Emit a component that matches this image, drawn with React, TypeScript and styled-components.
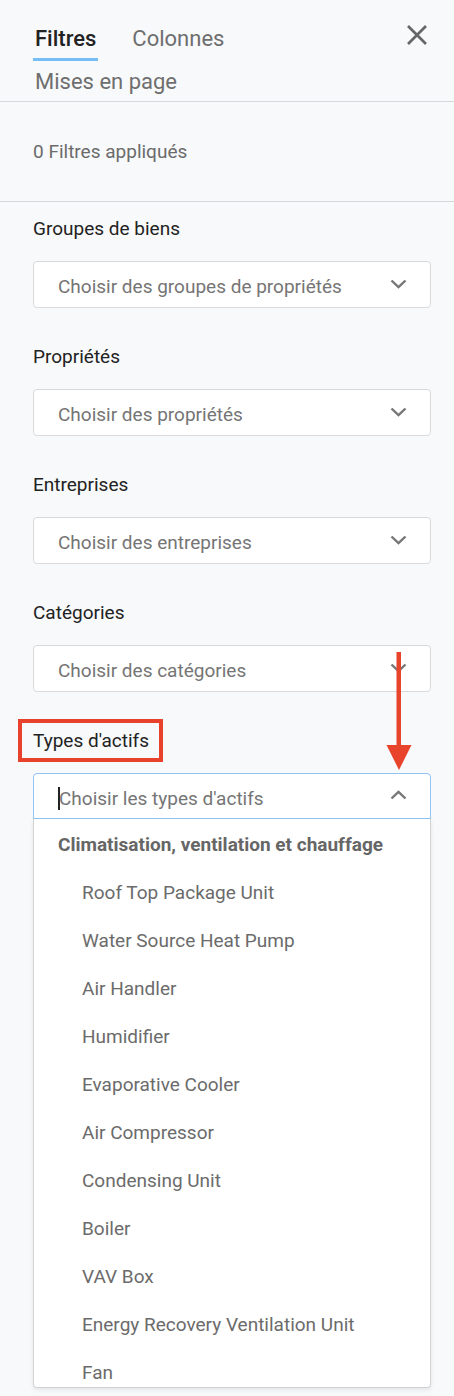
import React from 'react';
import styled, { createGlobalStyle } from 'styled-components';

const GlobalStyle = createGlobalStyle`
  html, body {
    margin: 0;
    padding: 0;
    background: #f8f9fb;
  }
  * {
    box-sizing: border-box;
  }
`;

const Page = styled.div`
  position: relative;
  width: 454px;
  height: 1396px;
  overflow: hidden;
  background: #f8f9fb;
  font-family: Roboto, "Liberation Sans", Arial, sans-serif;
  color: #222;
`;

const Header = styled.header`
  display: flex;
  align-items: flex-start;
  justify-content: space-between;
  padding: 26px 27px 0 33px;
  border-bottom: 1px solid #d5d7da;
`;

const Tabs = styled.nav`
  display: flex;
  flex-wrap: wrap;
  column-gap: 32px;
  row-gap: 8px;
  width: 330px;
  margin-bottom: -3px;
`;

const Tab = styled.button<{ $active?: boolean }>`
  border: 0;
  background: none;
  margin: 0;
  padding: 0 2px 6px;
  font-family: inherit;
  font-size: 22px;
  line-height: 26px;
  font-weight: ${p => (p.$active ? 500 : 400)};
  color: ${p => (p.$active ? '#222' : '#6e6e6e')};
  border-bottom: 3px solid ${p => (p.$active ? '#74bdf5' : 'transparent')};
  cursor: pointer;
`;

const CloseButton = styled.button`
  border: 0;
  background: none;
  padding: 0;
  margin-top: -1px;
  width: 20px;
  height: 20px;
  display: flex;
  align-items: center;
  justify-content: center;
  cursor: pointer;
`;

const Applied = styled.div`
  padding: 40px 33px;
  font-size: 19px;
  line-height: 19px;
  color: #6b6b6b;
  border-bottom: 1px solid #d5d7da;
`;

const Filters = styled.div`
  display: flex;
  flex-direction: column;
  padding: 17px 23px 0 33px;
`;

const Field = styled.div`
  display: flex;
  flex-direction: column;
  gap: 22px;
  margin-bottom: 39px;
`;

const Label = styled.div<{ $marked?: boolean }>`
  position: relative;
  align-self: flex-start;
  font-size: 19px;
  line-height: 20px;
  color: #222;

  ${p =>
    p.$marked &&
    `
    &::after {
      content: "";
      position: absolute;
      top: -12px;
      bottom: -11px;
      left: -15px;
      right: -14px;
      border: 4px solid #e8412c;
    }
  `}
`;

const Select = styled.div<{ $open?: boolean }>`
  display: flex;
  align-items: center;
  justify-content: space-between;
  height: ${p => (p.$open ? '46px' : '47px')};
  padding: 4px 23px 0 24px;
  background: #fff;
  border: 1px solid ${p => (p.$open ? '#8ec5f2' : '#d9d9d9')};
  border-radius: ${p => (p.$open ? '4px 4px 0 0' : '4px')};
  font-size: 19px;
  color: #757575;
`;

const Placeholder = styled.span`
  display: flex;
  align-items: center;
`;

const Caret = styled.span`
  display: inline-block;
  width: 2px;
  height: 23px;
  background: #222;
  margin-right: -1px;
`;

const ChevronBox = styled.span`
  display: flex;
  margin-top: -6px;
`;

const Menu = styled.div`
  margin-top: -22px;
  height: 569px;
  overflow: hidden;
  background: #fff;
  border: 1px solid #d2d2d2;
  border-top: 0;
  border-radius: 0 0 4px 4px;
  box-shadow: 0 2px 4px rgba(0, 0, 0, 0.08);
  padding-top: 2px;
`;

const GroupHeader = styled.div`
  height: 48px;
  line-height: 48px;
  padding-left: 24px;
  font-size: 19px;
  font-weight: 700;
  color: #666;
`;

const Option = styled.div`
  height: 48px;
  line-height: 48px;
  padding-left: 48px;
  font-size: 19px;
  color: #6b6b6b;
  white-space: nowrap;
`;

const Annotation = styled.svg`
  position: absolute;
  left: 386px;
  top: 652px;
`;

const Chevron = ({ up }: { up?: boolean }) => (
  <ChevronBox>
    <svg width="17" height="10" viewBox="0 0 17 10">
      <polyline
        points={up ? '1.5,8.5 8.5,1.8 15.5,8.5' : '1.5,1.5 8.5,8.2 15.5,1.5'}
        fill="none"
        stroke="#777"
        strokeWidth="2.4"
      />
    </svg>
  </ChevronBox>
);

const filters = [
  { label: 'Groupes de biens', placeholder: 'Choisir des groupes de propriétés' },
  { label: 'Propriétés', placeholder: 'Choisir des propriétés' },
  { label: 'Entreprises', placeholder: 'Choisir des entreprises' },
  { label: 'Catégories', placeholder: 'Choisir des catégories' },
];

const assetTypes = [
  'Roof Top Package Unit',
  'Water Source Heat Pump',
  'Air Handler',
  'Humidifier',
  'Evaporative Cooler',
  'Air Compressor',
  'Condensing Unit',
  'Boiler',
  'VAV Box',
  'Energy Recovery Ventilation Unit',
  'Fan',
];

export default function App() {
  return (
    <Page>
      <GlobalStyle />
      <Header>
        <Tabs>
          <Tab $active>Filtres</Tab>
          <Tab>Colonnes</Tab>
          <Tab>Mises en page</Tab>
        </Tabs>
        <CloseButton aria-label="Fermer">
          <svg width="20" height="20" viewBox="0 0 20 20">
            <path d="M1 1 L19 19 M19 1 L1 19" stroke="#666" strokeWidth="2.7" />
          </svg>
        </CloseButton>
      </Header>

      <Applied>0 Filtres appliqués</Applied>

      <Filters>
        {filters.map(f => (
          <Field key={f.label}>
            <Label>{f.label}</Label>
            <Select>
              <Placeholder>{f.placeholder}</Placeholder>
              <Chevron />
            </Select>
          </Field>
        ))}

        <Field>
          <Label $marked>Types d'actifs</Label>
          <Select $open>
            <Placeholder>
              <Caret />
              Choisir les types d'actifs
            </Placeholder>
            <Chevron up />
          </Select>
          <Menu>
            <GroupHeader>Climatisation, ventilation et chauffage</GroupHeader>
            {assetTypes.map(t => (
              <Option key={t}>{t}</Option>
            ))}
          </Menu>
        </Field>
      </Filters>

      <Annotation width="26" height="118" viewBox="0 0 26 118">
        <rect x="10.5" y="0" width="4.5" height="96" fill="#e8432b" />
        <polygon points="0.5,93 25.5,93 13,118" fill="#e8432b" />
      </Annotation>
    </Page>
  );
}
